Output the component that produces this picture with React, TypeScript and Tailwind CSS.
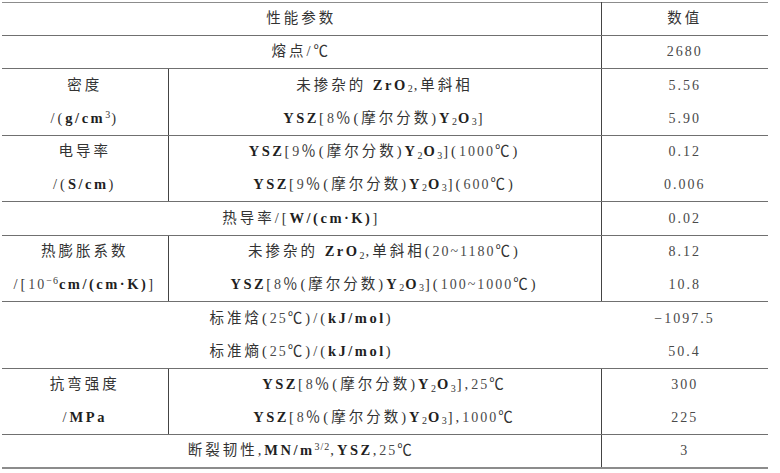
import React from 'react'

type Row = {
  group?: React.ReactNode
  param: React.ReactNode
  value: string
  span?: boolean // param spans group + param columns
  end?: boolean // last row of a group -> bottom rule
  open?: boolean // no vertical rule before value
  h: number
}

const B = ({ children }: { children: React.ReactNode }) => (
  <span className="font-bold text-[#1f1f1f] tracking-[2.5px]">{children}</span>
)

const Sub = ({ children }: { children: React.ReactNode }) => (
  <sub className="text-[10px] font-normal tracking-[1px]">{children}</sub>
)

const Sup = ({ children }: { children: React.ReactNode }) => (
  <sup className="text-[10px] font-normal tracking-[1px]">{children}</sup>
)

const Num = ({ children }: { children: React.ReactNode }) => (
  <span className="text-[#4a4a4a] text-[14px] tracking-[2px]">{children}</span>
)

const YSZ = ({ pct, tail }: { pct: string; tail?: React.ReactNode }) => (
  <>
    <B>YSZ</B>[<Num>{pct}</Num>％(摩尔分数)<B>Y</B><Sub>2</Sub><B>O</B><Sub>3</Sub>]{tail}
  </>
)

const rows: Row[] = [
  { param: '性能参数', value: '数值', span: true, end: true, h: 33 },
  { param: <>熔点/℃</>, value: '2680', span: true, end: true, h: 33 },
  {
    group: '密度',
    param: <>未掺杂的 <B>ZrO</B><Sub>2</Sub>,单斜相</>,
    value: '5.56',
    h: 34,
  },
  {
    group: <>/(<B>g/cm</B><Sup>3</Sup>)</>,
    param: <YSZ pct="8" />,
    value: '5.90',
    end: true,
    h: 33,
  },
  {
    group: '电导率',
    param: <YSZ pct="9" tail={<>(<Num>1000</Num>℃)</>} />,
    value: '0.12',
    h: 33,
  },
  {
    group: <>/(<B>S/cm</B>)</>,
    param: <YSZ pct="9" tail={<>(<Num>600</Num>℃)</>} />,
    value: '0.006',
    end: true,
    h: 33,
  },
  {
    param: <>热导率/[<B>W/(cm·K)</B>]</>,
    value: '0.02',
    span: true,
    end: true,
    h: 34,
  },
  {
    group: '热膨胀系数',
    param: <>未掺杂的 <B>ZrO</B><Sub>2</Sub>,单斜相(<Num>20~1180</Num>℃)</>,
    value: '8.12',
    h: 33,
  },
  {
    group: <>/[<Num>10</Num><Sup>−6</Sup><B>cm/(cm·K)</B>]</>,
    param: <YSZ pct="8" tail={<>(<Num>100~1000</Num>℃)</>} />,
    value: '10.8',
    end: true,
    h: 33,
  },
  {
    param: <>标准焓(<Num>25</Num>℃)/(<B>kJ/mol</B>)</>,
    value: '−1097.5',
    span: true,
    open: true,
    h: 34,
  },
  {
    param: <>标准熵(<Num>25</Num>℃)/(<B>kJ/mol</B>)</>,
    value: '50.4',
    span: true,
    open: true,
    end: true,
    h: 33,
  },
  {
    group: '抗弯强度',
    param: <YSZ pct="8" tail={<>,<Num>25</Num>℃</>} />,
    value: '300',
    h: 33,
  },
  {
    group: <>/<B>MPa</B></>,
    param: <YSZ pct="8" tail={<>,<Num>1000</Num>℃</>} />,
    value: '225',
    end: true,
    h: 33,
  },
  {
    param: <>断裂韧性,<B>MN/m</B><Sup>3/2</Sup>,<B>YSZ</B>,<Num>25</Num>℃</>,
    value: '3',
    span: true,
    h: 33,
  },
]

export default function App() {
  return (
    <div className="w-[780px] h-[473px] bg-white overflow-hidden pt-[2px] pl-[2px]">
      <table className="w-[766px] table-fixed border-collapse border-t border-t-[#8c8c8c] border-b-2 border-b-[#8c8c8c] font-['Liberation_Serif','Noto_Sans_CJK_SC',serif] text-[14.5px] tracking-[3px] text-[#333]">
        <colgroup>
          <col className="w-[166px]" />
          <col className="w-[433px]" />
          <col className="w-[167px]" />
        </colgroup>
        <tbody>
          {rows.map((r, i) => (
            <tr key={i} style={{ height: r.h }}>
              {!r.span && (
                <td
                  className={`p-0 text-center align-middle whitespace-nowrap border-r border-r-[#444] ${
                    r.end ? 'border-b border-b-[#707070]' : ''
                  }`}
                >
                  {r.group}
                </td>
              )}
              <td
                colSpan={r.span ? 2 : 1}
                className={`p-0 text-center align-middle whitespace-nowrap ${
                  r.open ? '' : 'border-r border-r-[#444]'
                } ${r.end ? 'border-b border-b-[#707070]' : ''}`}
              >
                {r.param}
              </td>
              <td
                className={`p-0 text-center align-middle ${
                  r.end ? 'border-b border-b-[#707070]' : ''
                }`}
              >
                {i === 0 ? r.value : <Num>{r.value}</Num>}
              </td>
            </tr>
          ))}
        </tbody>
      </table>
    </div>
  )
}
